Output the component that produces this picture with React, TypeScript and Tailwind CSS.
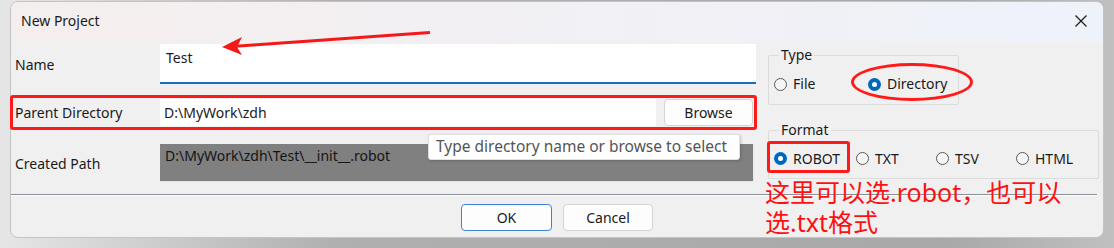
import React from "react";

const font = { fontFamily: '"Noto Sans", "Open Sans", Arial, sans-serif' };
const cjk = { fontFamily: '"Noto Sans", "Noto Sans CJK SC", sans-serif' };

const Radio = ({ checked, label, className = "" }: { checked?: boolean; label: string; className?: string }) => (
  <div className={`flex items-center gap-[6px] ${className}`}>
    {checked ? (
      <span className="w-[13px] h-[13px] rounded-full bg-[#0067c0] flex items-center justify-center">
        <span className="w-[5px] h-[5px] rounded-full bg-white" />
      </span>
    ) : (
      <span className="w-[13px] h-[13px] rounded-full border border-[#5a5a5a] bg-[#f5f5f5]" />
    )}
    <span className="text-[14px] text-[#1a1a1a] leading-none">{label}</span>
  </div>
);

const Group = ({ title, className, children }: { title: string; className: string; children: React.ReactNode }) => (
  <div className={`relative border border-[#dcdcdc] rounded-[2px] ${className}`}>
    <span className="absolute -top-[11px] left-[10px] px-[2px] bg-[#f0f0f0] text-[14px] leading-[20px] text-[#1a1a1a]">
      {title}
    </span>
    {children}
  </div>
);

export default function App() {
  return (
    <div
      className="relative w-[1114px] h-[248px] overflow-hidden bg-[linear-gradient(90deg,#e6e6e6_0%,#b0b0b0_30%,#a8a8a8_85%,#c0c0c0_100%)]"
      style={font}
    >
      <div className="ml-[10px] mt-[1px] w-[1094px] h-[237px] rounded-[8px] border border-[#c4c4c4] bg-[#f0f0f0] overflow-hidden flex flex-col">
        {/* title bar */}
        <div className="h-[40px] flex items-center justify-between pl-[10px] pr-[16px] pb-[3px] bg-[linear-gradient(90deg,#f5eeee,#eef2fa)]">
          <span className="text-[14px] text-[#1a1a1a]">New Project</span>
          <svg width="12" height="12" viewBox="0 0 12 12">
            <path d="M0.5 0.5 L11.5 11.5 M11.5 0.5 L0.5 11.5" stroke="#1a1a1a" strokeWidth="1.2" />
          </svg>
        </div>

        {/* body */}
        <div className="flex h-[152px]">
          <div className="w-[747px] flex flex-col pl-[4px]">
            <div className="mt-[2px] h-[40px] flex">
              <span className="w-[145px] self-center text-[14px] text-[#1a1a1a]">Name</span>
              <div className="flex-1 mr-[2px] bg-white border-b-2 border-[#1a6dc0] pl-[6px] pt-[3px] text-[14px] text-[#1a1a2a]">
                Test
              </div>
            </div>
            <div className="mt-[15px] h-[27px] flex items-center">
              <span className="w-[145px] text-[14px] text-[#1a1a1a]">Parent Directory</span>
              <div className="w-[496px] h-full bg-white pl-[4px] flex items-center text-[14px] text-[#1a1a1a]">
                D:\MyWork\zdh
              </div>
              <div className="ml-[8px] w-[89px] h-full bg-[#fdfdfd] border border-[#d4d4d4] rounded-[4px] flex items-center justify-center text-[14px] text-[#1a1a1a]">
                Browse
              </div>
            </div>
            <div className="mt-[18px] h-[38px] flex">
              <span className="w-[145px] self-center text-[14px] text-[#1a1a1a]">Created Path</span>
              <div className="w-[594px] h-full bg-[#808080] border-b border-r border-[#e8e8e8] pl-[5px] pt-[1px] text-[14px] text-[#141414]">
                D:\MyWork\zdh\Test\__init__.robot
              </div>
            </div>
          </div>

          <div className="ml-[10px] w-[331px] flex flex-col">
            <Group title="Type" className="mt-[13px] w-[191px] h-[50px] flex items-center pl-[5px]">
              <Radio label="File" className="mt-[8px] w-[94px]" />
              <Radio checked label="Directory" className="mt-[8px]" />
            </Group>
            <Group title="Format" className="mt-[25px] w-[331px] h-[49px] flex items-center pl-[5px]">
              <Radio checked label="ROBOT" className="mt-[8px] w-[82px]" />
              <Radio label="TXT" className="mt-[8px] w-[80px]" />
              <Radio label="TSV" className="mt-[8px] w-[80px]" />
              <Radio label="HTML" className="mt-[8px]" />
            </Group>
          </div>
        </div>

        <div className="mr-[6px] border-t border-[#8a9098] shadow-[0_1px_0_#ffffff]" />

        <div className="flex-1 flex items-start justify-center gap-[11px] pt-[9px]">
          <div className="w-[91px] h-[27px] bg-[#fdfdfd] border border-[#3b83d6] rounded-[4px] flex items-center justify-center text-[14px] text-[#1a1a1a]">
            OK
          </div>
          <div className="w-[90px] h-[27px] bg-[#fdfdfd] border border-[#d4d4d4] rounded-[4px] flex items-center justify-center text-[14px] text-[#1a1a1a]">
            Cancel
          </div>
        </div>
      </div>

      {/* tooltip */}
      <div className="absolute left-[428px] top-[134px] w-[312px] h-[26px] bg-white border border-[#e2e2e2] rounded-[3px] shadow-[1px_1px_3px_rgba(0,0,0,0.2)] flex items-center pl-[7px] text-[15.5px] text-[#555555] whitespace-nowrap">
        Type directory name or browse to select
      </div>

      {/* annotations */}
      <div className="absolute left-[10px] top-[95px] w-[747px] h-[35px] border-[3px] border-[#ff1a1a] rounded-[3px]" />
      <div className="absolute left-[851px] top-[63px] w-[122px] h-[38px] border-[3px] border-[#ff1a1a] rounded-[50%]" />
      <div className="absolute left-[767px] top-[141px] w-[83px] h-[32px] border-[3px] border-[#ff1a1a] rounded-[3px]" />
      <svg className="absolute left-0 top-0" width="1114" height="248">
        <path d="M222 47 L242 37 L237 47 L242 55 Z" fill="#f51818" />
        <line x1="430" y1="32.5" x2="232" y2="46.5" stroke="#f51818" strokeWidth="3" />
      </svg>
      <div className="absolute left-[765px] top-[177px] flex flex-col text-[25px] leading-[30px] text-[#ff1010]" style={cjk}>
        <span className="whitespace-nowrap">这里可以选.robot，也可以</span>
        <span className="whitespace-nowrap">选.txt格式</span>
      </div>
    </div>
  );
}
